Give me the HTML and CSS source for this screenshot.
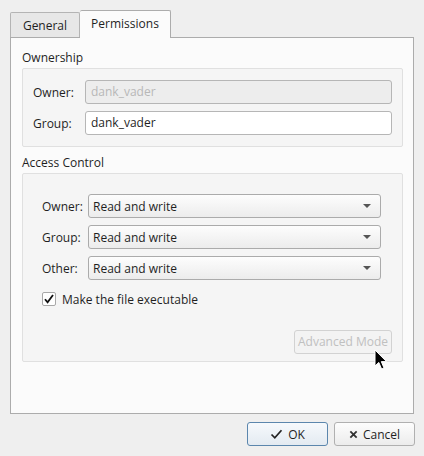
FILE: index.html
```html
<!DOCTYPE html>
<html>
<head>
<meta charset="utf-8">
<link rel="stylesheet" href="styles.css">
</head>
<body>
<div class="dialog">
  <div class="tabs">
    <div class="tab">General</div>
    <div class="tab active">Permissions</div>
  </div>
  <div class="panel">
    <div class="section-title">Ownership</div>
    <div class="groupbox own">
      <div class="row">
        <span class="label">Owner:</span>
        <div class="field disabled">dank_vader</div>
      </div>
      <div class="row">
        <span class="label">Group:</span>
        <div class="field">dank_vader</div>
      </div>
    </div>
    <div class="section-title second">Access Control</div>
    <div class="groupbox access">
      <div class="combos">
        <div class="row">
          <span class="label">Owner:</span>
          <div class="combo"><span>Read and write</span><span class="arrow"></span></div>
        </div>
        <div class="row">
          <span class="label">Group:</span>
          <div class="combo"><span>Read and write</span><span class="arrow"></span></div>
        </div>
        <div class="row">
          <span class="label">Other:</span>
          <div class="combo"><span>Read and write</span><span class="arrow"></span></div>
        </div>
        <label class="check-row">
          <span class="checkbox"><svg width="12" height="12" viewBox="0 0 12 12"><path d="M2 6.2 L4.6 9.4 L10 2" fill="none" stroke="#111" stroke-width="1.8"/></svg></span>
          <span>Make the file executable</span>
        </label>
      </div>
      <div class="adv-row">
        <div class="btn-disabled">Advanced Mode</div>
      </div>
    </div>
  </div>
  <div class="buttons">
    <div class="btn ok"><svg width="13" height="12" viewBox="0 0 13 12"><path d="M1.5 6.5 L4.8 9.8 L11.5 2.2" fill="none" stroke="#222" stroke-width="1.7"/></svg><span>OK</span></div>
    <div class="btn"><svg width="9" height="9" viewBox="0 0 10 10"><path d="M1.5 1.5 L8.5 8.5 M8.5 1.5 L1.5 8.5" stroke="#333" stroke-width="2"/></svg><span>Cancel</span></div>
  </div>
  <svg class="cursor" width="14" height="22" viewBox="0 0 14 22"><path d="M1 1 L1 17 L4.8 13.4 L7.6 20 L10 19 L7.3 12.6 L12.5 12.6 Z" fill="#000" stroke="#fff" stroke-width="1"/></svg>
</div>
</body>
</html>
```
FILE: styles.css
```css
* { box-sizing: border-box; }
html, body { margin: 0; padding: 0; }
body {
  background: #efefef;
  font-family: "Open Sans", "Noto Sans", sans-serif;
  font-size: 12px;
  color: #1f1f1f;
  width: 424px;
  height: 456px;
  overflow: hidden;
}
.dialog {
  position: relative;
  padding: 10px 10px 0 10px;
}
.tabs {
  display: flex;
  align-items: flex-end;
  height: 27px;
  position: relative;
  z-index: 1;
}
.tab {
  height: 25px;
  width: 70px;
  text-align: center;
  background: #e7e7e7;
  border: 1px solid #b4b4b4;
  border-bottom: none;
  border-radius: 2px 2px 0 0;
  line-height: 24px;
  padding-top: 1px;
}
.tab.active {
  width: 91px;
  height: 28px;
  margin-bottom: -1px;
  background: #fbfbfb;
  border-color: #acacac;
  line-height: 26px;
  padding-top: 0;
  border-left: none;
}
.panel {
  height: 377px;
  background: #fbfbfb;
  border: 1px solid #acacac;
  width: 404px;
  padding: 11px 10px 0 11px;
}
.section-title {
  line-height: 18px;
  height: 18px;
  margin-bottom: 1px;
}
.section-title.second {
  margin-top: 7px;
  margin-bottom: 1px;
}
.groupbox {
  background: #f5f5f5;
  border: 1px solid #e0e0e0;
  border-radius: 2px;
  width: 381px;
}
.groupbox.own {
  padding: 11px 10px 11px 10px;
  display: flex;
  flex-direction: column;
  gap: 7px;
}
.row {
  display: flex;
  align-items: center;
  height: 24px;
}
.own .label { width: 52px; }
.field {
  flex: 1;
  height: 24px;
  border: 1px solid #b6b6b6;
  border-radius: 3px;
  background: #fff;
  line-height: 22px;
  padding-left: 5px;
}
.field.disabled {
  background: #ededed;
  color: #b8b8b8;
}
.groupbox.access {
  height: 189px;
  padding: 20px 10px 0 19px;
}
.combos {
  display: flex;
  flex-direction: column;
  gap: 7px;
  padding-right: 11px;
}
.access .label { width: 46px; }
.combo {
  flex: 1;
  height: 24px;
  border: 1px solid #ababab;
  border-radius: 3px;
  background: linear-gradient(#fdfdfd, #ececec);
  display: flex;
  align-items: center;
  justify-content: space-between;
  padding: 0 9px 0 4px;
}
.arrow {
  width: 0;
  height: 0;
  border-left: 4px solid transparent;
  border-right: 4px solid transparent;
  border-top: 4px solid #555;
}
.check-row {
  display: flex;
  align-items: center;
  gap: 6px;
  height: 20px;
  margin-top: 2px;
}
.checkbox {
  width: 14px;
  height: 14px;
  border: 1px solid #a8a8a8;
  border-radius: 2px;
  background: #fff;
  display: flex;
  align-items: center;
  justify-content: center;
}
.adv-row {
  display: flex;
  justify-content: flex-end;
  margin-top: 21px;
}
.btn-disabled {
  width: 98px;
  height: 24px;
  border: 1px solid #d2d2d2;
  border-radius: 3px;
  background: #f3f3f3;
  color: #c0c0c0;
  text-align: center;
  line-height: 22px;
  white-space: nowrap;
}
.buttons {
  display: flex;
  justify-content: flex-end;
  gap: 6px;
  margin-top: 8px;
  margin-right: -1px;
}
.btn {
  width: 81px;
  height: 24px;
  border: 1px solid #b0b0b0;
  border-radius: 3px;
  background: linear-gradient(#fdfdfd, #ececec);
  display: flex;
  align-items: center;
  justify-content: center;
  gap: 5px;
}
.btn.ok {
  border-color: #5b86ad;
  background: linear-gradient(#f6f9fc, #e3eaf1);
}
.cursor {
  position: absolute;
  left: 374px;
  top: 349px;
}
```
